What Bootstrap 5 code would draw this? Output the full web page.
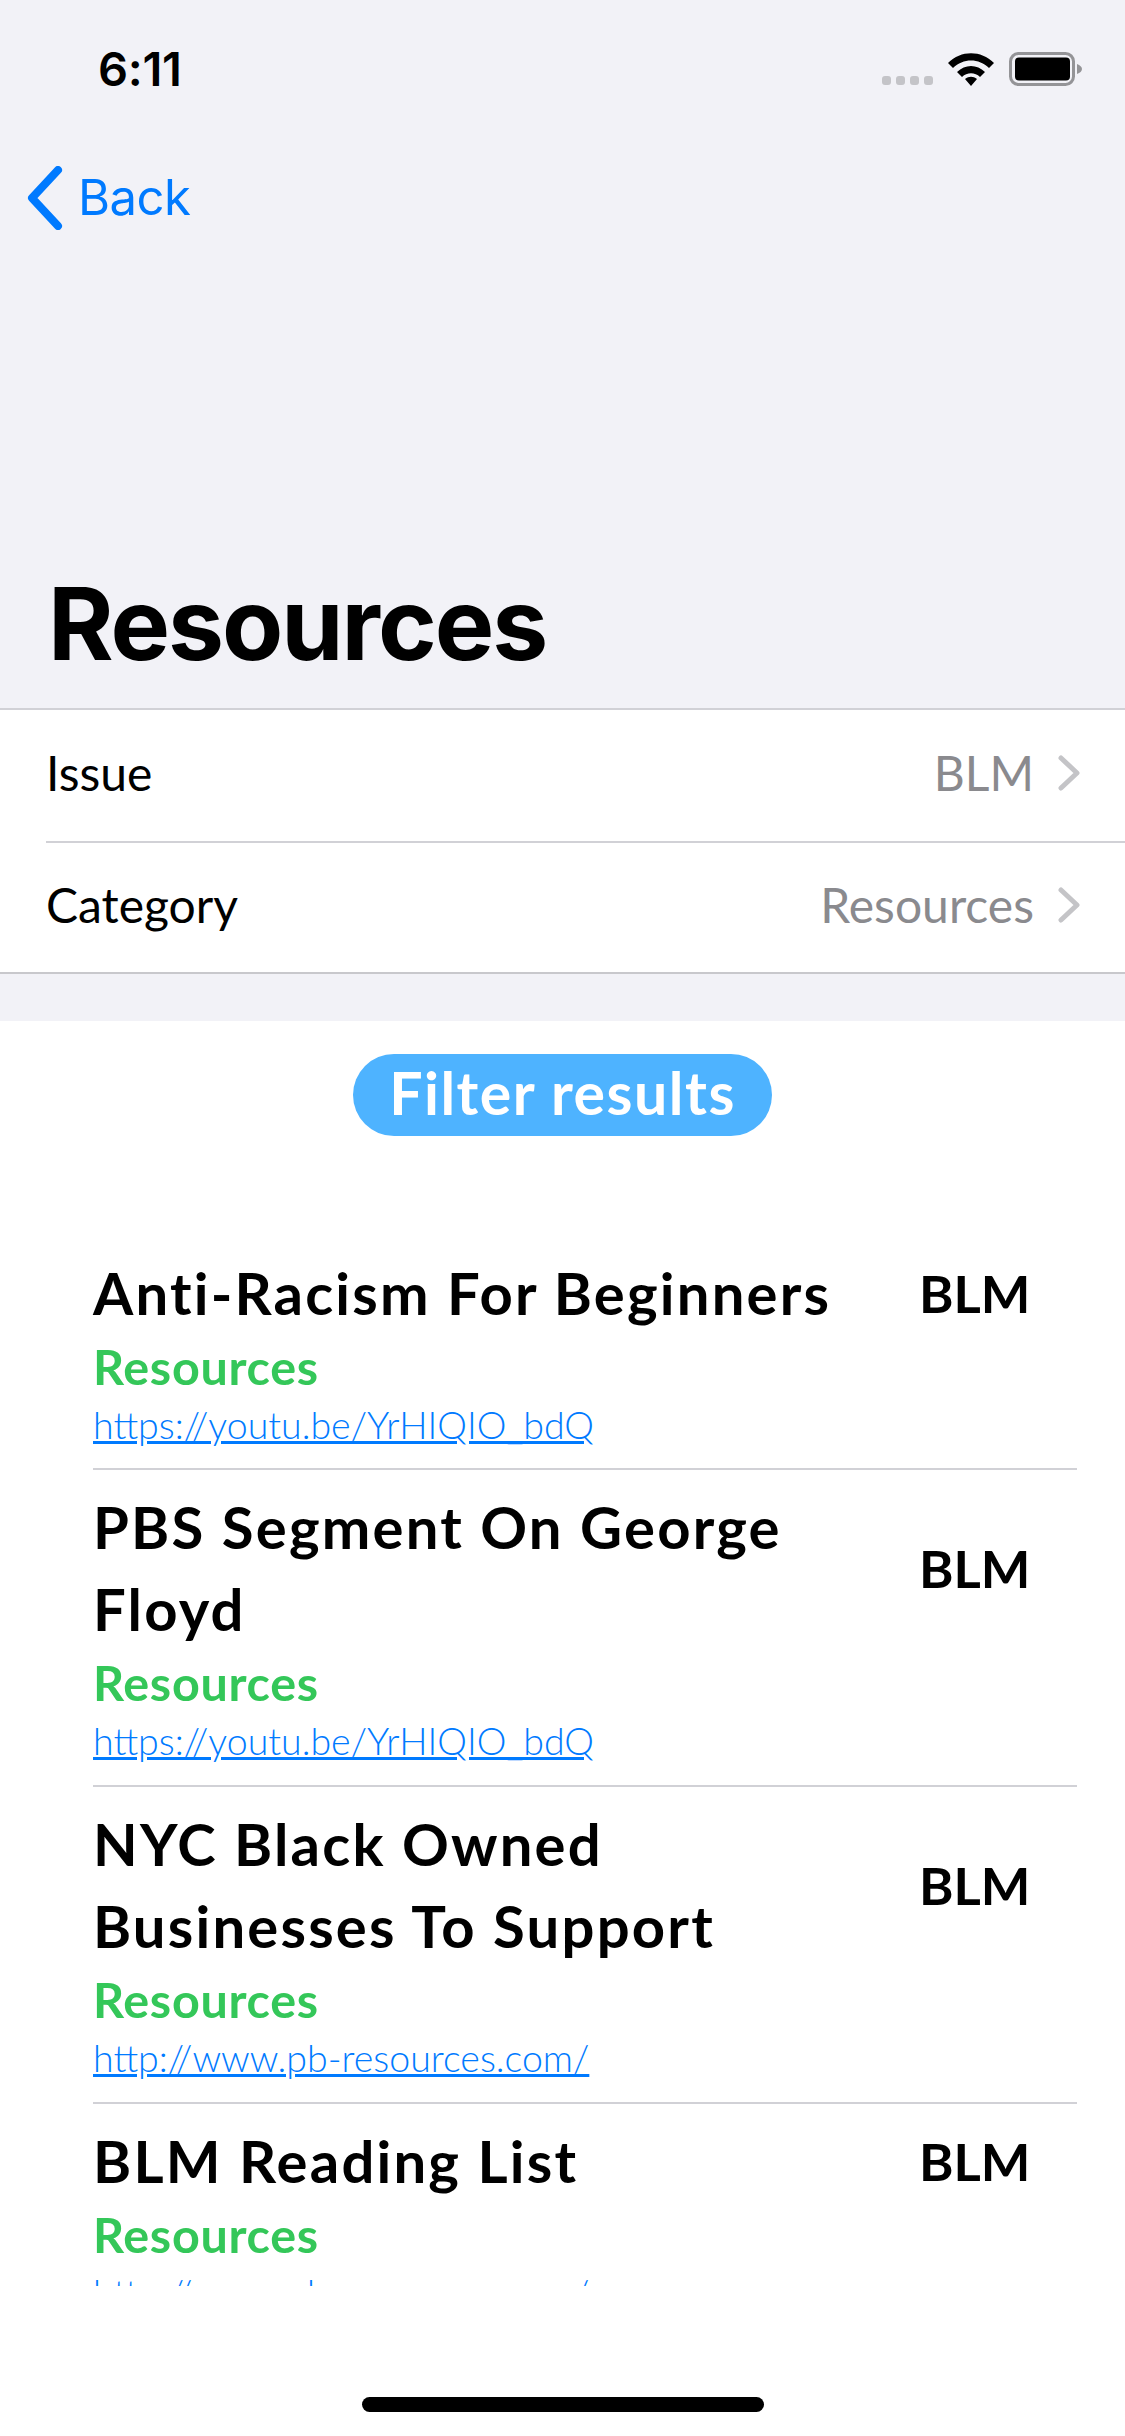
<!DOCTYPE html>
<html lang="en">
<head>
  <meta charset="UTF-8">
  <meta name="viewport" content="width=device-width, initial-scale=1.0">
  <title>Resources</title>
  <link href="https://cdn.jsdelivr.net/npm/bootstrap@5.3.3/dist/css/bootstrap.min.css" rel="stylesheet">
  <style>
    body {
      width: 1125px;
      height: 2436px;
      overflow: hidden;
      background-color: #fff;
      font-family: Lato, sans-serif;
    }

    .head-area {
      height: 708px;
      background-color: #f2f2f7;
      font-family: Inter, "Liberation Sans", sans-serif;
    }

    .status-row {
      height: 138px;
      padding: 45px 43px 0 98px;
    }

    .status-time {
      font-size: 47px;
      line-height: 48px;
      font-weight: 600;
      letter-spacing: -0.3px;
      color: #000;
    }

    .status-icons {
      gap: 15px;
      margin-top: 7px;
    }

    .back-row {
      height: 120px;
      padding-left: 27px;
      gap: 15px;
      color: #007aff;
      font-size: 49px;
      letter-spacing: -0.5px;
      text-decoration: none;
    }

    .page-title {
      margin: 306px 0 0 48px;
      font-family: Inter, sans-serif;
      font-size: 100px;
      line-height: 120px;
      font-weight: 700;
      letter-spacing: -2px;
      color: #000;
    }

    .filter-rows {
      border-top: 2px solid #d1d1d6;
      border-bottom: 2px solid #c8c8cc;
      font-size: 48px;
      font-weight: 400;
    }

    .filter-line {
      height: 131px;
      padding-right: 45px;
      padding-bottom: 5px;
      margin-left: 46px;
      color: #000;
    }

    .filter-line + .filter-line {
      border-top: 2px solid #d1d1d6;
    }

    .filter-value {
      color: #8a8a8e;
      margin-right: 24px;
    }

    .gap-band {
      height: 47px;
      background-color: #f2f2f7;
    }

    .filter-btn {
      width: 419px;
      height: 82px;
      margin: 33px auto 0;
      padding: 0 0 5px;
      display: block;
      border: 0;
      border-radius: 41px;
      background-color: #4eb3ff;
      color: #fff;
      font-size: 59px;
      line-height: 76px;
      font-weight: 700;
      letter-spacing: 1.5px;
    }

    .results-clip {
      height: 1150px;
      padding: 0 48px 0 93px;
      overflow: hidden;
    }

    .result-row {
      border-bottom: 2px solid #d1d1d6;
      padding: 16px 0 18px;
    }

    .result-row:first-child {
      margin-top: 100px;
      padding-bottom: 17px;
    }

    .result-title {
      font-size: 58px;
      line-height: 82px;
      font-weight: 700;
      letter-spacing: 2.2px;
      color: #000;
    }

    .result-issue {
      width: 158px;
      font-size: 52.5px;
      font-weight: 700;
      color: #000;
    }

    .result-cat {
      font-size: 48.5px;
      line-height: 65px;
      font-weight: 700;
      letter-spacing: 0.7px;
      color: #34c759;
    }

    .result-link {
      display: block;
      font-size: 37.5px;
      line-height: 52px;
      font-weight: 300;
      color: #007aff;
    }

    .home-bar {
      width: 402px;
      height: 15px;
      margin: 111px auto 0;
      border-radius: 8px;
      background-color: #000;
    }
  </style>
</head>
<body>
  <div class="head-area">
    <div class="status-row d-flex justify-content-between align-items-start">
      <span class="status-time">6:11</span>
      <div class="status-icons d-flex align-items-center">
        <svg width="51" height="10" viewBox="0 0 51 10" class="align-self-end"><g fill="#c4c4c8"><rect x="0" y="0" width="9" height="9" rx="3"/><rect x="14" y="0" width="9" height="9" rx="3"/><rect x="28" y="0" width="9" height="9" rx="3"/><rect x="42" y="0" width="9" height="9" rx="3"/></g></svg>
        <svg width="46" height="33" viewBox="0 0 46 33"><path d="M0 10 C13 -3 33 -3 46 10 L41 15 C31 5 15 5 5 15 Z M9 19 C17 11 29 11 37 19 L32 24 C27 19 19 19 14 24 Z M17 26 C21 23 25 23 29 26 L23 33 Z" fill="#000"/></svg>
        <svg width="73" height="34" viewBox="0 0 73 34"><rect x="1.5" y="1.5" width="63" height="31" rx="8" fill="none" stroke="#949497" stroke-width="3"/><rect x="6" y="5.5" width="55" height="23" rx="4" fill="#000"/><path d="M68 12 C71 13 73 15 73 17 C73 19 71 21 68 22 Z" fill="#949497"/></svg>
      </div>
    </div>
    <a href="#" class="back-row d-flex align-items-center">
      <svg width="36" height="64" viewBox="0 0 36 64"><path d="M31 4 L5 32 L31 60" fill="none" stroke="#007aff" stroke-width="8" stroke-linecap="round" stroke-linejoin="round"/></svg>
      <span>Back</span>
    </a>
    <h1 class="page-title">Resources</h1>
  </div>

  <div class="filter-rows bg-white">
    <div class="filter-line d-flex align-items-center">
      <span class="flex-grow-1">Issue</span>
      <span class="filter-value">BLM</span>
      <svg width="22" height="36" viewBox="0 0 22 36"><path d="M3 3 L19 18 L3 33" fill="none" stroke="#c4c4c7" stroke-width="5" stroke-linecap="round" stroke-linejoin="round"/></svg>
    </div>
    <div class="filter-line d-flex align-items-center">
      <span class="flex-grow-1">Category</span>
      <span class="filter-value">Resources</span>
      <svg width="22" height="36" viewBox="0 0 22 36"><path d="M3 3 L19 18 L3 33" fill="none" stroke="#c4c4c7" stroke-width="5" stroke-linecap="round" stroke-linejoin="round"/></svg>
    </div>
  </div>
  <div class="gap-band"></div>

  <button type="button" class="btn filter-btn">Filter results</button>

  <div class="results-clip">
    <div class="result-row">
      <div class="d-flex align-items-center">
        <div class="result-title flex-grow-1">Anti-Racism For Beginners</div>
        <div class="result-issue">BLM</div>
      </div>
      <div class="result-cat">Resources</div>
      <a class="result-link" href="#">https://youtu.be/YrHIQIO_bdQ</a>
    </div>
    <div class="result-row">
      <div class="d-flex align-items-center">
        <div class="result-title flex-grow-1">PBS Segment On George<br>Floyd</div>
        <div class="result-issue">BLM</div>
      </div>
      <div class="result-cat">Resources</div>
      <a class="result-link" href="#">https://youtu.be/YrHIQIO_bdQ</a>
    </div>
    <div class="result-row">
      <div class="d-flex align-items-center">
        <div class="result-title flex-grow-1">NYC Black Owned<br>Businesses To Support</div>
        <div class="result-issue">BLM</div>
      </div>
      <div class="result-cat">Resources</div>
      <a class="result-link" href="#">http://www.pb-resources.com/</a>
    </div>
    <div class="result-row">
      <div class="d-flex align-items-center">
        <div class="result-title flex-grow-1">BLM Reading List</div>
        <div class="result-issue">BLM</div>
      </div>
      <div class="result-cat">Resources</div>
      <a class="result-link" href="#">http://www.pb-resources.com/</a>
    </div>
  </div>

  <div class="home-bar"></div>

  <script src="https://cdn.jsdelivr.net/npm/bootstrap@5.3.3/dist/js/bootstrap.bundle.min.js"></script>
</body>
</html>
